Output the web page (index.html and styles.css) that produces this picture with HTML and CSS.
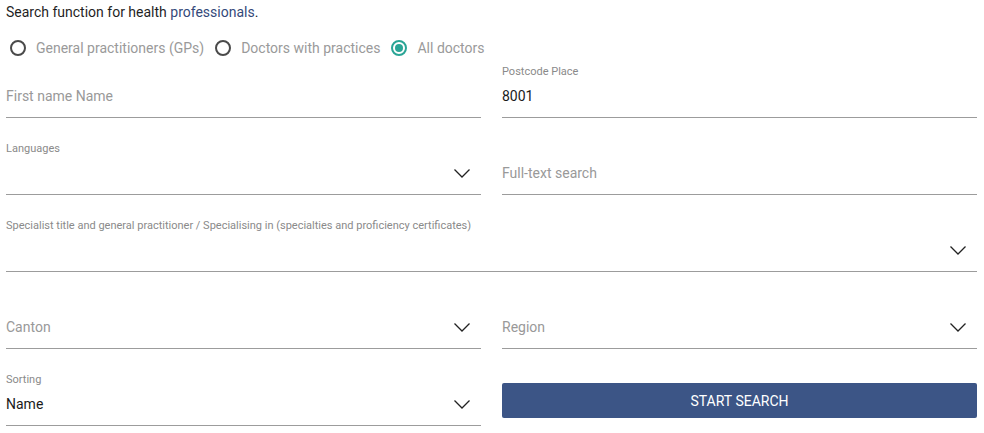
FILE: index.html
```html
<!DOCTYPE html>
<html>
<head>
<meta charset="utf-8">
<link rel="stylesheet" href="styles.css">
</head>
<body>
<div class="page">
  <p class="intro">Search function for health <a class="link" href="#">professionals</a>.</p>
  <div class="radios">
    <label class="radio"><span class="dot"></span><span class="rlabel">General practitioners (GPs)</span></label>
    <label class="radio"><span class="dot"></span><span class="rlabel">Doctors with practices</span></label>
    <label class="radio"><span class="dot checked"></span><span class="rlabel">All doctors</span></label>
  </div>
  <div class="grid">
    <div class="field r1">
      <div class="control"><span class="placeholder">First name Name</span></div>
    </div>
    <div class="field r1">
      <div class="flabel">Postcode Place</div>
      <div class="control"><span class="value">8001</span></div>
    </div>

    <div class="field">
      <div class="flabel">Languages</div>
      <div class="control"><span></span>
        <svg class="chev" viewBox="0 0 16 9"><polyline points="0.5,0.5 8,8 15.5,0.5"/></svg></div>
    </div>
    <div class="field">
      <div class="control"><span class="placeholder">Full-text search</span></div>
    </div>

    <div class="field wide">
      <div class="flabel">Specialist title and general practitioner / Specialising in (specialties and proficiency certificates)</div>
      <div class="control"><span></span>
        <svg class="chev" viewBox="0 0 16 9"><polyline points="0.5,0.5 8,8 15.5,0.5"/></svg></div>
    </div>

    <div class="field">
      <div class="control"><span class="placeholder">Canton</span>
        <svg class="chev" viewBox="0 0 16 9"><polyline points="0.5,0.5 8,8 15.5,0.5"/></svg></div>
    </div>
    <div class="field">
      <div class="control"><span class="placeholder">Region</span>
        <svg class="chev" viewBox="0 0 16 9"><polyline points="0.5,0.5 8,8 15.5,0.5"/></svg></div>
    </div>

    <div class="field">
      <div class="flabel">Sorting</div>
      <div class="control"><span class="value">Name</span>
        <svg class="chev" viewBox="0 0 16 9"><polyline points="0.5,0.5 8,8 15.5,0.5"/></svg></div>
    </div>
    <div class="btncell">
      <button class="btn">START SEARCH</button>
    </div>
  </div>
</div>
</body>
</html>
```
FILE: styles.css
```css
html, body {
  margin: 0;
  padding: 0;
  background: #fff;
}
body {
  font-family: Roboto, "Liberation Sans", Arial, sans-serif;
  font-size: 14px;
  color: #222;
}
.page {
  padding: 2px 7px 0 6px;
}
.intro {
  margin: 0;
  line-height: 20px;
  color: #1f1f1f;
}
.link {
  color: #34497a;
  text-decoration: none;
}
.radios {
  display: flex;
  align-items: center;
  gap: 11px;
  height: 24px;
  margin-top: 14px;
  padding-left: 4px;
}
.radio {
  display: flex;
  align-items: center;
}
.dot {
  box-sizing: border-box;
  width: 16px;
  height: 16px;
  border: 2px solid #4a4a4a;
  border-radius: 50%;
  margin-right: 10px;
  display: flex;
  align-items: center;
  justify-content: center;
}
.dot.checked {
  border-color: #2aa596;
}
.dot.checked::after {
  content: "";
  width: 8px;
  height: 8px;
  border-radius: 50%;
  background: #2aa596;
}
.rlabel {
  color: #9a9a9a;
  line-height: 20px;
}
.grid {
  display: grid;
  grid-template-columns: 475px 475px;
  column-gap: 21px;
  grid-template-rows: 58px 77px 77px 77px 77px;
}
.field {
  display: flex;
  flex-direction: column;
  justify-content: flex-end;
  border-bottom: 1px solid #9c9c9c;
}
.field.wide {
  grid-column: 1 / 3;
}
.flabel {
  font-size: 11px;
  line-height: 14px;
  color: #8a8a8a;
}
.control {
  box-sizing: border-box;
  height: 38px;
  padding-bottom: 4px;
  display: flex;
  align-items: center;
  justify-content: space-between;
}
.placeholder {
  color: #999;
}
.value {
  color: #1a1a1a;
}
.chev {
  width: 16px;
  height: 9px;
  margin-right: 11px;
  fill: none;
  stroke: #222;
  stroke-width: 1.3;
}
.btncell {
  display: flex;
  align-items: flex-end;
  padding-bottom: 8px;
}
.btn {
  width: 100%;
  height: 35px;
  border: 0;
  border-radius: 2px;
  background: #3c5586;
  color: #fff;
  font-family: Roboto, "Liberation Sans", Arial, sans-serif;
  font-size: 14px;
  letter-spacing: 0;
  padding: 0;
}
```
